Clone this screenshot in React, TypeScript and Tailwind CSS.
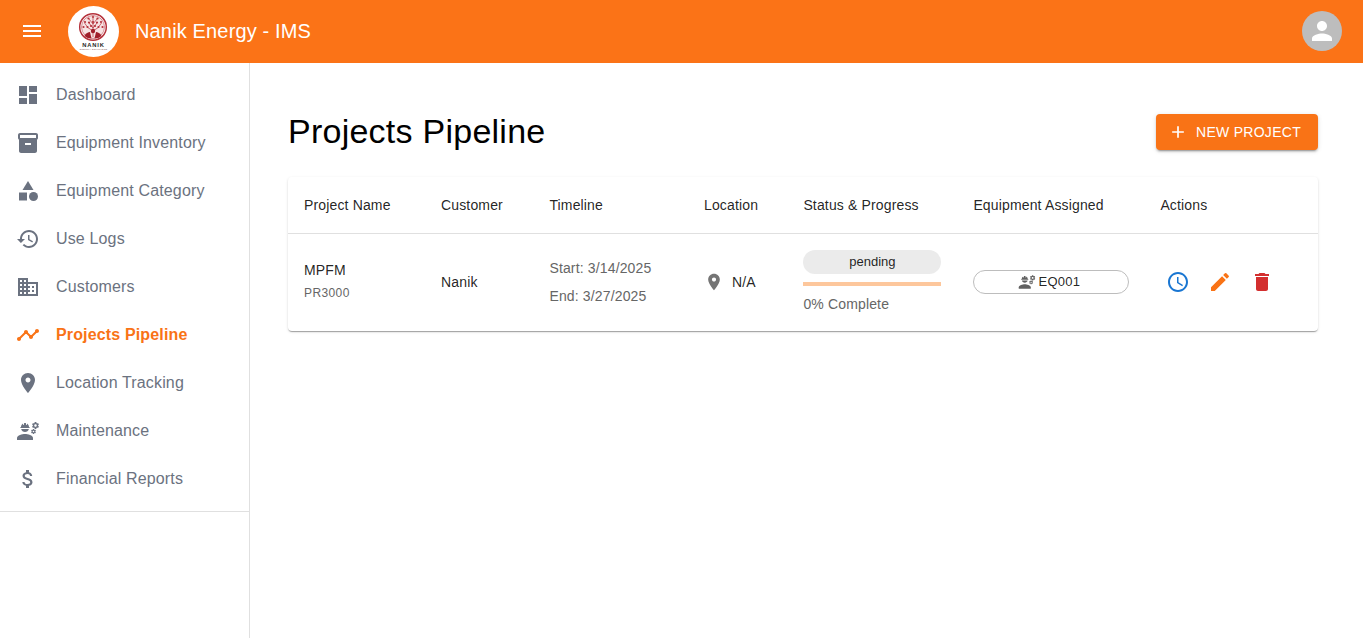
import React from "react";

const P = {
  menu: ["M3 18h18v-2H3zm0-5h18v-2H3zm0-7v2h18V6z"],
  dashboard: ["M3 13h8V3H3zm0 8h8v-6H3zm10 0h8V11h-8zm0-18v6h8V3z"],
  inventory: ["M20 2H4c-1 0-2 .9-2 2v3.01c0 .72.43 1.34 1 1.69V20c0 1.1 1.1 2 2 2h14c.9 0 2-.9 2-2V8.7c.57-.35 1-.97 1-1.69V4c0-1.1-1-2-2-2m-5 12H9v-2h6zm5-7H4V4l16-.02z"],
  category: ["m12 2-5.5 9h11z", "M17.5 13a4.5 4.5 0 1 0 0 9 4.5 4.5 0 0 0 0-9", "M3 13.5h8v8H3z"],
  history: ["M13 3c-4.97 0-9 4.03-9 9H1l3.89 3.89.07.14L9 12H6c0-3.87 3.13-7 7-7s7 3.13 7 7-3.13 7-7 7c-1.93 0-3.68-.79-4.94-2.06l-1.42 1.42C8.27 19.99 10.51 21 13 21c4.97 0 9-4.03 9-9s-4.03-9-9-9m-1 5v5l4.28 2.54.72-1.21-3.5-2.08V8z"],
  business: ["M12 7V3H2v18h20V7zM6 19H4v-2h2zm0-4H4v-2h2zm0-4H4V9h2zm0-4H4V5h2zm4 12H8v-2h2zm0-4H8v-2h2zm0-4H8V9h2zm0-4H8V5h2zm10 12h-8v-2h2v-2h-2v-2h2v-2h-2V9h8zm-2-8h-2v2h2zm0 4h-2v2h2z"],
  timeline: ["M23 8c0 1.1-.9 2-2 2-.18 0-.35-.02-.51-.07l-3.56 3.55c.05.16.07.34.07.52 0 1.1-.9 2-2 2s-2-.9-2-2c0-.18.02-.36.07-.52l-2.55-2.55c-.16.05-.34.07-.52.07s-.36-.02-.52-.07l-4.55 4.56c.05.16.07.33.07.51 0 1.1-.9 2-2 2s-2-.9-2-2 .9-2 2-2c.18 0 .35.02.51.07l4.56-4.55C8.02 9.36 8 9.18 8 9c0-1.1.9-2 2-2s2 .9 2 2c0 .18-.02.36-.07.52l2.55 2.55c.16-.05.34-.07.52-.07s.36.02.52.07l3.55-3.56C19.02 8.35 19 8.18 19 8c0-1.1.9-2 2-2s2 .9 2 2"],
  location: ["M12 2C8.13 2 5 5.13 5 9c0 5.25 7 13 7 13s7-7.75 7-13c0-3.87-3.13-7-7-7m0 9.5c-1.38 0-2.5-1.12-2.5-2.5s1.12-2.5 2.5-2.5 2.5 1.12 2.5 2.5-1.12 2.5-2.5 2.5"],
  engineering: [
    "M9 15c-2.67 0-8 1.34-8 4v2h16v-2c0-2.66-5.33-4-8-4",
    "M22.1 6.84c.01-.11.02-.22.02-.34 0-.12-.01-.23-.03-.34l.74-.58c.07-.05.08-.15.04-.22l-.7-1.21c-.04-.08-.14-.1-.21-.08l-.86.35c-.18-.14-.38-.25-.59-.34l-.13-.93c-.02-.09-.09-.15-.18-.15h-1.4c-.09 0-.16.06-.17.15l-.13.93c-.21.09-.41.21-.59.34l-.87-.35c-.08-.03-.17 0-.21.08l-.7 1.21c-.04.08-.03.17.04.22l.74.58c-.02.11-.03.23-.03.34 0 .11.01.23.03.34l-.74.58c-.07.05-.08.15-.04.22l.7 1.21c.04.08.14.1.21.08l.87-.35c.18.14.38.25.59.34l.13.93c.01.09.08.15.17.15h1.4c.09 0 .16-.06.17-.15l.13-.93c.21-.09.41-.21.59-.34l.87.35c.08.03.17 0 .21-.08l.7-1.21c.04-.08.03-.17-.04-.22zm-2.6.91c-.69 0-1.25-.56-1.25-1.25s.56-1.25 1.25-1.25 1.25.56 1.25 1.25-.56 1.25-1.25 1.25",
    "m19.92 11.68-.5-.87c-.03-.06-.1-.08-.15-.06l-.62.25c-.13-.1-.27-.18-.42-.24l-.09-.66c-.02-.06-.08-.1-.14-.1h-1c-.06 0-.11.04-.12.11l-.09.66c-.15.06-.29.15-.42.24l-.62-.25c-.06-.02-.12 0-.15.06l-.5.87c-.03.06-.02.12.03.16l.53.41c-.02.08-.03.16-.03.24 0 .08.01.17.02.25l-.53.41c-.05.04-.06.11-.03.16l.5.87c.03.06.1.08.15.06l.62-.25c.13.1.27.18.42.24l.09.66c.01.07.06.11.12.11h1c.06 0 .12-.04.12-.11l.09-.66c.15-.06.29-.15.42-.24l.62.25c.06.02.12 0 .15-.06l.5-.87c.03-.06.02-.12-.03-.16l-.52-.41c.01-.08.02-.16.02-.25 0-.09-.01-.17-.02-.25l.53-.41c.05-.04.06-.1.03-.16m-2.42 1.65c-.46 0-.83-.38-.83-.83 0-.46.38-.83.83-.83s.83.38.83.83c0 .46-.37.83-.83.83",
    "M4.74 9h8.53c.27 0 .49-.22.49-.49v-.02c0-.27-.22-.49-.49-.49H13c0-1.48-.81-2.75-2-3.45v.95c0 .28-.22.5-.5.5s-.5-.22-.5-.5V4.14C9.68 4.06 9.35 4 9 4s-.68.06-1 .14V5.5c0 .28-.22.5-.5.5S7 5.78 7 5.5v-.95C5.81 5.25 5 6.52 5 8h-.26c-.27 0-.49.22-.49.49v.03c0 .26.22.48.49.48",
    "M9 13c1.86 0 3.41-1.28 3.86-3H5.14c.45 1.72 2 3 3.86 3",
  ],
  money: ["M11.8 10.9c-2.27-.59-3-1.2-3-2.15 0-1.09 1.01-1.85 2.7-1.85 1.78 0 2.44.85 2.5 2.1h2.21c-.07-1.72-1.12-3.3-3.21-3.81V3h-3v2.16c-1.94.42-3.5 1.68-3.5 3.61 0 2.31 1.91 3.46 4.7 4.13 2.5.6 3 1.48 3 2.41 0 .69-.49 1.79-2.7 1.79-2.06 0-2.87-.92-2.98-2.1h-2.2c.12 2.19 1.76 3.42 3.68 3.83V21h3v-2.15c1.95-.37 3.5-1.5 3.5-3.55 0-2.84-2.43-3.81-4.7-4.4"],
  add: ["M19 13h-6v6h-2v-6H5v-2h6V5h2v6h6z"],
  person: ["M12 12c2.21 0 4-1.79 4-4s-1.79-4-4-4-4 1.79-4 4 1.79 4 4 4m0 2c-2.67 0-8 1.34-8 4v2h16v-2c0-2.66-5.33-4-8-4"],
  time: ["M11.99 2C6.47 2 2 6.48 2 12s4.47 10 9.99 10C17.52 22 22 17.52 22 12S17.52 2 11.99 2M12 20c-4.42 0-8-3.58-8-8s3.58-8 8-8 8 3.58 8 8-3.58 8-8 8", "M12.5 7H11v6l5.25 3.15.75-1.23-4.5-2.67z"],
  edit: ["M3 17.25V21h3.75L17.81 9.94l-3.75-3.75zM20.71 7.04c.39-.39.39-1.02 0-1.41l-2.34-2.34a.9959.9959 0 0 0-1.41 0l-1.83 1.83 3.75 3.75z"],
  trash: ["M6 19c0 1.1.9 2 2 2h8c1.1 0 2-.9 2-2V7H6zM19 4h-3.5l-1-1h-5l-1 1H5v2h14z"],
};

function Icon({ d, className }: { d: string[]; className: string }) {
  return (
    <svg viewBox="0 0 24 24" fill="currentColor" className={className}>
      {d.map((p, i) => (
        <path key={i} d={p} />
      ))}
    </svg>
  );
}

function Logo() {
  const red = "#b5313b";
  const dots: [number, number][] = [
    [25, 11], [20.5, 12.5], [29.5, 12.5], [17, 16], [33, 16], [21, 16.5], [29, 16.5], [25, 16],
    [15.5, 21], [34.5, 21], [19.5, 21], [30.5, 21], [23, 20], [27, 20],
  ];
  return (
    <svg viewBox="0 0 51 51" className="w-[51px] h-[51px] block">
      <circle cx="25.5" cy="25.5" r="25.5" fill="#ffffff" />
      <circle cx="25" cy="21" r="13.300" fill="none" stroke={red} strokeWidth="1.500" />
      <circle cx="25" cy="21" r="11.500" fill="#f7e3e3" stroke={red} strokeWidth="0.500" />
      <g stroke={red} strokeWidth="0.700" fill="none">
        <path d="M25 31V12M25 25l-6-4M25 25l6-4M25 22l-4-5M25 22l4-5M25 18l-4-5M25 18l4-5M19.500 21l-3-4M30.500 21l3-4" />
      </g>
      {dots.map(([x, y], i) => (
        <circle key={i} cx={x} cy={y} r="1.100" fill={red} />
      ))}
      <circle cx="25" cy="25" r="2.200" fill="#a01f2b" />
      <path d="M16.500 30c1-3 4-4 5.500-4l1.500 6.500q-4 0-7-2.500M33.500 30c-1-3-4-4-5.500-4l-1.500 6.500q4 0 7-2.500" fill="#a01f2b" />
      <text x="25.500" y="41" textAnchor="middle" fontSize="5.800" fontWeight="700" letterSpacing="0.8" fill="#2a2a2a" fontFamily="'Liberation Sans', sans-serif">NANIK</text>
      <text x="25.500" y="44" textAnchor="middle" fontSize="2.400" fill="#8a5a5a" letterSpacing="0.2" fontFamily="'Liberation Sans', sans-serif">ENERGY SOLUTIONS</text>
    </svg>
  );
}

const nav: { label: string; icon: string[]; active?: boolean }[] = [
  { label: "Dashboard", icon: P.dashboard },
  { label: "Equipment Inventory", icon: P.inventory },
  { label: "Equipment Category", icon: P.category },
  { label: "Use Logs", icon: P.history },
  { label: "Customers", icon: P.business },
  { label: "Projects Pipeline", icon: P.timeline, active: true },
  { label: "Location Tracking", icon: P.location },
  { label: "Maintenance", icon: P.engineering },
  { label: "Financial Reports", icon: P.money },
];

const heads: [string, string][] = [
  ["Project Name", "w-[137px]"],
  ["Customer", "w-[108.4px]"],
  ["Timeline", "w-[154.6px]"],
  ["Location", "w-[99.4px]"],
  ["Status & Progress", "w-[170px]"],
  ["Equipment Assigned", "w-[187px]"],
  ["Actions", "w-[173.6px]"],
];

export default function App() {
  return (
    <div className="h-screen flex flex-col overflow-hidden bg-white font-['Liberation_Sans',Arial,sans-serif]">
      <header className="h-[63px] shrink-0 bg-[#fb7317] text-white flex items-center pl-5 pr-[21px] pb-px">
        <Icon d={P.menu} className="w-6 h-6 text-white" />
        <div className="ml-6 mt-px">
          <Logo />
        </div>
        <h1 className="ml-4 text-[20px] leading-[32px] tracking-[0.0075em]">Nanik Energy - IMS</h1>
        <div className="ml-auto w-10 h-10 rounded-full bg-[#bdbdbd] flex items-center justify-center">
          <Icon d={P.person} className="w-[30px] h-[30px] text-white" />
        </div>
      </header>
      <div className="flex flex-1 min-h-0">
        <aside className="w-[250px] shrink-0 border-r border-[#e0e0e0]">
          <nav className="pt-2 pb-2 border-b border-[#e0e0e0] h-[449px]">
            {nav.map((n) => (
              <div
                key={n.label}
                className={
                  "h-12 flex items-center px-4 " + (n.active ? "text-[#f97316]" : "text-[#6b7280]")
                }
              >
                <div className="w-10 shrink-0">
                  <Icon d={n.icon} className="w-6 h-6" />
                </div>
                <span className={"text-[16px] tracking-[0.00938em] " + (n.active ? "font-bold" : "")}>{n.label}</span>
              </div>
            ))}
          </nav>
        </aside>
        <main className="flex-1 min-w-0 pl-[38px] pr-[45px] pt-[51px]">
          <div className="flex items-center justify-between h-9 mb-[27px]">
            <h2 className="text-[34px] leading-[42px] tracking-[0.00735em] text-black mb-[2px]">Projects Pipeline</h2>
            <button className="h-9 w-[162px] rounded bg-[#f97316] text-white text-[14px] tracking-[0.02em] flex items-center pl-3 gap-2 shadow-[0_3px_1px_-2px_rgba(0,0,0,0.2),0_2px_2px_0_rgba(0,0,0,0.14),0_1px_5px_0_rgba(0,0,0,0.12)]">
              <Icon d={P.add} className="w-5 h-5" />
              NEW PROJECT
            </button>
          </div>
          <div className="rounded shadow-[0_2px_1px_-1px_rgba(0,0,0,0.2),0_1px_1px_0_rgba(0,0,0,0.14),0_1px_3px_0_rgba(0,0,0,0.12)]">
            <table className="w-full table-fixed border-collapse text-[14px] tracking-[0.01071em] text-[rgba(0,0,0,0.87)]">
              <thead>
                <tr className="h-[56px] border-b border-[#e0e0e0]">
                  {heads.map(([h, w]) => (
                    <th key={h} className={"px-4 pt-0.5 text-left font-normal " + w}>
                      {h}
                    </th>
                  ))}
                </tr>
              </thead>
              <tbody>
                <tr className="h-[98px]">
                  <td className="px-4">
                    <div className="pb-px">
                      <div className="leading-[20px]">MPFM</div>
                      <div className="text-[12px] leading-[20px] mt-[3px] tracking-[0.03333em] text-[#666666]">PR3000</div>
                    </div>
                  </td>
                  <td className="px-4">Nanik</td>
                  <td className="px-4 text-[#666666] leading-[28px]">
                    <div>Start: 3/14/2025</div>
                    <div>End: 3/27/2025</div>
                  </td>
                  <td className="px-4">
                    <div className="flex items-center gap-2">
                      <Icon d={P.location} className="w-5 h-5 text-[#757575]" />
                      <span>N/A</span>
                    </div>
                  </td>
                  <td className="px-4">
                    <div className="w-[138px]">
                      <div className="h-6 pb-px rounded-full bg-[#ebebeb] flex items-center justify-center text-[13px] leading-none tracking-normal text-[rgba(0,0,0,0.87)]">pending</div>
                      <div className="h-1 mt-2 bg-[#fdc79c]" />
                      <div className="mt-[8px] leading-[20px] text-[#666666]">0% Complete</div>
                    </div>
                  </td>
                  <td className="px-4">
                    <div className="w-[156px] h-6 pr-1 pb-px rounded-full border border-[#bdbdbd] flex items-center justify-center gap-[2px] text-[13px] tracking-[0.02em]">
                      <Icon d={P.engineering} className="w-[18px] h-[18px] text-[#616161]" />
                      <span>EQ001</span>
                    </div>
                  </td>
                  <td className="px-[14px]">
                    <div className="flex items-center gap-[2px]">
                      <div className="w-10 h-10 flex items-center justify-center">
                        <Icon d={P.time} className="w-6 h-6 text-[#1976d2]" />
                      </div>
                      <div className="w-10 h-10 flex items-center justify-center">
                        <Icon d={P.edit} className="w-6 h-6 text-[#f97316]" />
                      </div>
                      <div className="w-10 h-10 flex items-center justify-center">
                        <Icon d={P.trash} className="w-6 h-6 text-[#d32f2f]" />
                      </div>
                    </div>
                  </td>
                </tr>
              </tbody>
            </table>
          </div>
        </main>
      </div>
    </div>
  );
}
